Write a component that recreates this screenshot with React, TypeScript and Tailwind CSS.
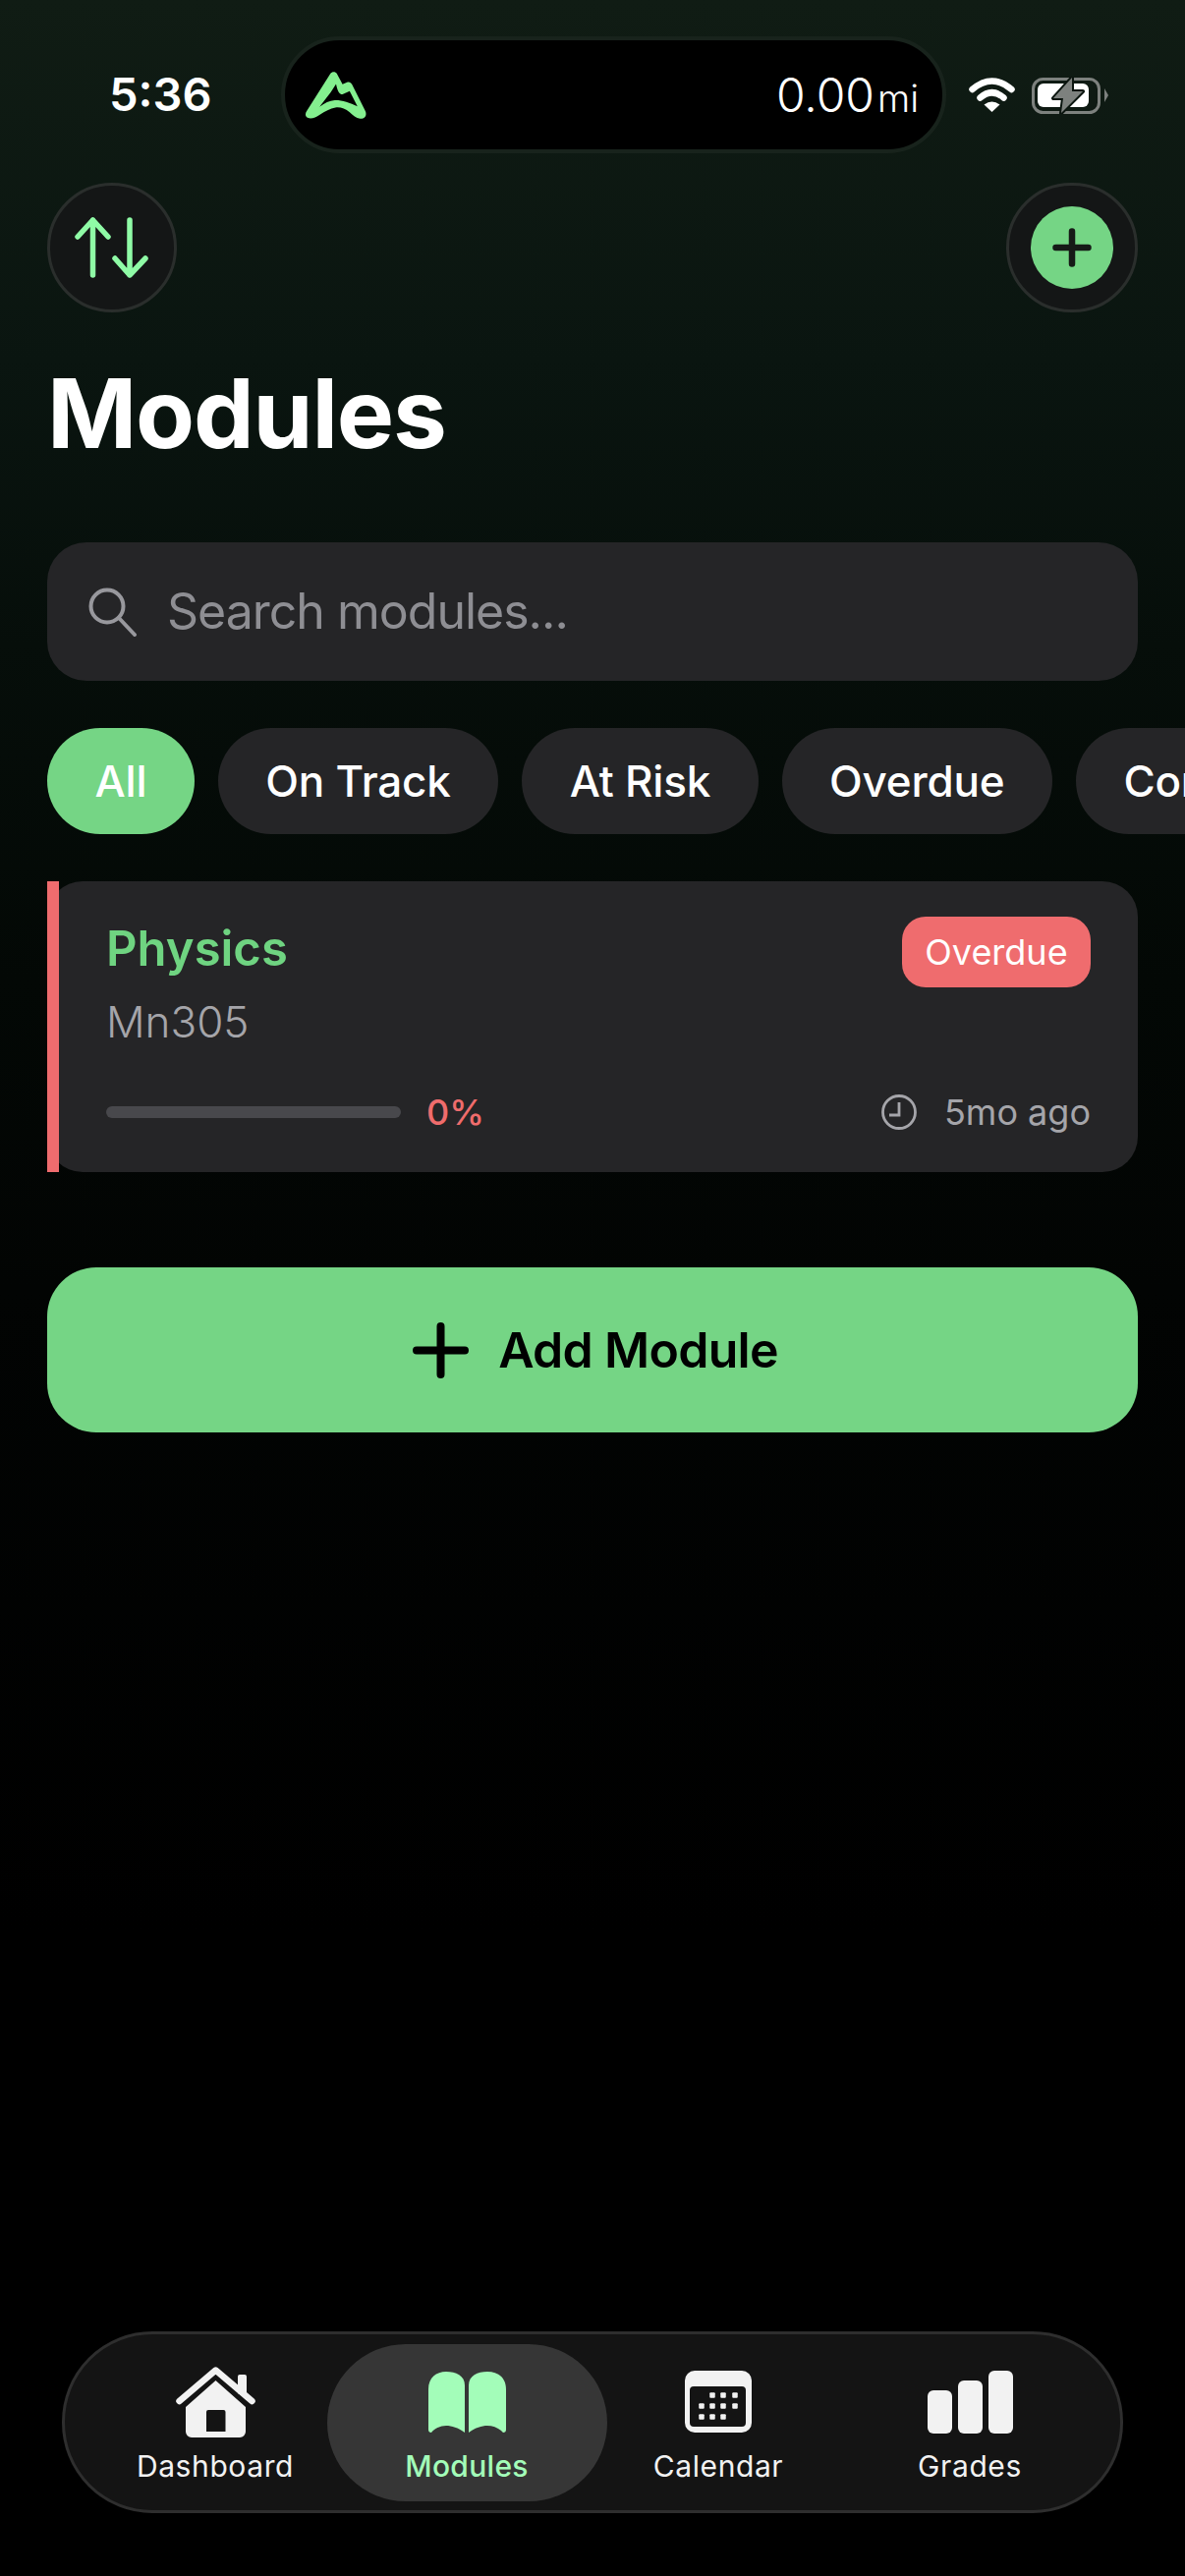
const font = { fontFamily: 'Inter, "Noto Sans", sans-serif' };

function HomeIcon() {
  return (
    <svg width="81" height="72" viewBox="0 0 81 72">
      <rect x="63" y="8" width="9" height="20" rx="2" fill="#f2f2f2" />
      <path d="M3.5 35 L40.5 3.5 L77.5 35" fill="none" stroke="#f2f2f2" strokeWidth="6.5" strokeLinecap="round" strokeLinejoin="round" />
      <path
        fillRule="evenodd"
        fill="#f2f2f2"
        d="M40.5 14 L71 41 V66 a6 6 0 0 1 -6 6 H16 a6 6 0 0 1 -6 -6 V41 Z M33 44 a2 2 0 0 0 -2 2 V66 H50.5 V46 a2 2 0 0 0 -2 -2 Z"
      />
    </svg>
  );
}

function BookIcon() {
  return (
    <svg width="79" height="62" viewBox="0 0 79 62" fill="#a3fdb9">
      <path d="M0 18 C0 6 8 0 18 0 C28 0 37 4 37 14 V62 C30 57 24 55 18 55 C12 55 6 58 3 62 C1 62 0 61 0 59 Z" />
      <path d="M79 18 C79 6 71 0 60 0 C50 0 41 4 41 14 V62 C48 57 54 55 60 55 C66 55 73 58 76 62 C78 62 79 61 79 59 Z" />
    </svg>
  );
}

function CalendarIcon() {
  const dots = [
    [28, 25], [39, 25], [51, 25],
    [17, 36], [28, 36], [39, 36], [51, 36],
    [17, 47], [28, 47], [39, 47],
  ];
  return (
    <svg width="68" height="63" viewBox="0 0 68 63">
      <path
        fillRule="evenodd"
        fill="#f2f2f2"
        d="M10 0 H58 a10 10 0 0 1 10 10 V53 a10 10 0 0 1 -10 10 H10 a10 10 0 0 1 -10 -10 V10 a10 10 0 0 1 10 -10 Z M9 16 a4 4 0 0 0 -4 4 V53 a4 4 0 0 0 4 4 H58 a4 4 0 0 0 4 -4 V20 a4 4 0 0 0 -4 -4 Z"
      />
      {dots.map(([x, y]) => (
        <rect key={`${x}-${y}`} x={x - 2.75} y={y - 2.75} width="5.5" height="5.5" rx="1" fill="#f2f2f2" />
      ))}
    </svg>
  );
}

function GradesIcon() {
  return (
    <svg width="87" height="64" viewBox="0 0 87 64" fill="#f2f2f2">
      <rect x="0" y="20" width="25" height="44" rx="6" />
      <rect x="31" y="10" width="25" height="54" rx="6" />
      <rect x="62" y="0" width="25" height="64" rx="6" />
    </svg>
  );
}

function NavItem({ label, active, icon }: { label: string; active?: boolean; icon: React.ReactNode }) {
  return (
    <div
      className={
        active
          ? 'relative -mx-[14.5px] flex h-[160px] w-[285px] flex-col items-center rounded-[80px] bg-[#363636] pt-[23px]'
          : 'flex h-[160px] w-[256px] flex-col items-center pt-[23px]'
      }
    >
      <div className="flex h-[72px] items-center">{icon}</div>
      <span
        className={`mt-[11px] text-[30px] leading-[36px] ${
          active ? 'font-medium tracking-[0.3px] text-[#a3fdb9]' : 'font-normal tracking-[0.6px] text-[#f2f2f2]'
        }`}
      >
        {label}
      </span>
    </div>
  );
}

function Chip({ label, active }: { label: string; active?: boolean }) {
  return (
    <div
      className={`flex h-[108px] shrink-0 items-center rounded-[54px] px-[48.5px] text-[44px] font-[450] tracking-[-0.2px] text-white ${
        active ? 'bg-[#75d585]' : 'bg-[#252527]'
      }`}
    >
      {label}
    </div>
  );
}

export default function App() {
  return (
    <div
      className="flex h-[2622px] w-[1206px] flex-col overflow-hidden bg-[linear-gradient(180deg,#101c14_0%,#0a1510_14%,#060e0a_25%,#030805_38%,#020403_50%,#000000_75%)] text-white"
      style={font}
    >
      {/* status bar */}
      <div className="mt-[37px] flex h-[119px] items-center pl-[111px]">
        <span className="w-[175px] text-[47px] font-semibold">5:36</span>
        <div className="flex h-[119px] w-[677px] items-center justify-between rounded-full border-[4px] border-[#18231c] bg-black pr-[24px] pl-[21px]">
          <svg width="62" height="48" viewBox="122 128 188 144">
            <path
              fillRule="evenodd"
              fill="#84f08f"
              d="M198 134 C204 126 214 126 219 134 L236 166 L250 160 C256 157 262 160 265 166 L306 248 C313 262 304 274 290 272 C278 270 268 262 258 252 C244 240 228 236 214 238 C198 240 182 250 166 260 C154 268 140 274 130 270 C120 266 120 256 126 248 Z M216 165 L200 190 L165 236 C180 224 196 216 212 215 C232 214 258 222 282 234 L258 187 L236 197 C226 198 220 185 216 165 Z"
            />
          </svg>
          <div className="flex items-baseline text-white">
            <span className="text-[48px] font-[350]">0.00</span>
            <span className="ml-[3px] text-[38px] font-[350]">mi</span>
          </div>
        </div>
        <svg className="ml-[23px]" width="47" height="35" viewBox="0 0 47 35" fill="none">
          <path d="M3.5 12 Q23.5 -5 43.5 12" stroke="#fff" strokeWidth="6.5" strokeLinecap="round" />
          <path d="M11.5 20.5 Q23.5 10 35.5 20.5" stroke="#fff" strokeWidth="6.5" strokeLinecap="round" />
          <path d="M15.5 27.5 Q23.5 21.5 31.5 27.5 L23.5 35 Z" fill="#fff" />
        </svg>
        <svg className="ml-[17px]" width="78" height="38" viewBox="0 0 78 38">
          <rect x="1.5" y="2.5" width="67" height="34" rx="10" fill="none" stroke="#7d817e" strokeWidth="3" />
          <rect x="6" y="7" width="52" height="24" rx="6" fill="#fff" />
          <path d="M74 12 L78 19 L74 26 Z" fill="#7d817e" />
          <path d="M41 1 L22 22 H32 L30 37 L52 15 H41 Z" fill="#7d817e" stroke="#0b150f" strokeWidth="4" strokeLinejoin="round" />
          <path d="M41 1 L22 22 H32 L30 37 L52 15 H41 Z" fill="#7d817e" />
        </svg>
      </div>

      <div className="mt-[30px] flex items-center justify-between pr-[48px] pl-[48px]">
        <div className="flex h-[132px] w-[132px] items-center justify-center rounded-full border-[3px] border-[#2a2e2c] bg-[#141616]">
          <svg width="76" height="62" viewBox="0 0 76 62" fill="none" stroke="#8ffba6" strokeWidth="5.5" strokeLinecap="round" strokeLinejoin="round">
            <path d="M18.5 59 V3 M3 20 L18.5 3 L34 20" />
            <path d="M56 3 V59 M41 42 L56 59 L72 42" />
          </svg>
        </div>
        <div className="flex h-[132px] w-[134px] items-center justify-center rounded-full border-[3px] border-[#2a2e2c] bg-[#141616]">
          <div className="flex h-[84px] w-[84px] items-center justify-center rounded-full bg-[#75d585]">
            <svg width="40" height="40" viewBox="0 0 40 40" stroke="#161a17" strokeWidth="6.5" strokeLinecap="round">
              <path d="M20 3.5 V36.5 M3.5 20 H36.5" />
            </svg>
          </div>
        </div>
      </div>

      <div className="flex flex-col px-[48px]">
        <h1 className="mt-[44px] text-[98px] leading-[118px] font-bold tracking-[-1.2px]">Modules</h1>

        <div className="mt-[72px] flex h-[141px] items-center rounded-[40px] bg-[#252527] pl-[42px]">
          <svg width="50" height="50" viewBox="0 0 50 50" fill="none" stroke="#98989d" strokeWidth="4" strokeLinecap="round">
            <circle cx="19" cy="19" r="16.5" />
            <path d="M31 31 L47 48" />
          </svg>
          <span className="ml-[30px] text-[50px] tracking-[-1px] text-[#8e8e93]">Search modules...</span>
        </div>

        <div className="mt-[48px] flex gap-[24px]">
          <Chip label="All" active />
          <Chip label="On Track" />
          <Chip label="At Risk" />
          <Chip label="Overdue" />
          <Chip label="Completed" />
        </div>

        <div className="relative mt-[48px] h-[296px] rounded-[36px] bg-[#252527] pt-[39px] pr-[48px] pl-[60px]">
          <div className="absolute top-0 bottom-0 left-0 w-[12px] bg-[#ef6c6e]" />
          <div className="absolute top-[36px] right-[48px] flex h-[72px] w-[192px] items-center justify-center rounded-[24px] bg-[#ef6c6e] text-[36px] text-white">
            Overdue
          </div>
          <div className="text-[49px] leading-[60px] font-semibold text-[#6fd481]">Physics</div>
          <div className="mt-[18px] text-[44px] leading-[52px] font-[350] text-[#a5a5aa]">Mn305</div>
          <div className="mt-[39px] flex items-center">
            <div className="h-[12px] w-[300px] rounded-full bg-[#48484c]" />
            <span className="ml-[26px] text-[36px] font-medium text-[#ef6c6c]">0%</span>
            <svg className="mr-[28px] ml-auto" width="36" height="36" viewBox="0 0 36 36" fill="none" stroke="#a5a5aa" strokeWidth="2.8">
              <circle cx="18" cy="18" r="16.5" />
              <path d="M18 8 V21 H8" />
            </svg>
            <span className="text-[36px] text-[#a5a5aa]">5mo ago</span>
          </div>
        </div>

        <div className="mt-[97px] flex h-[168px] items-center justify-center gap-[30px] rounded-[50px] bg-[#75d585] pl-[6px] text-black">
          <svg width="57" height="57" viewBox="0 0 57 57" stroke="#000" strokeWidth="8" strokeLinecap="round">
            <path d="M28.5 4 V53 M4 28.5 H53" />
          </svg>
          <span className="text-[50px] font-semibold tracking-[-0.7px]">Add Module</span>
        </div>
      </div>

      <nav className="mt-auto mb-[64px] ml-[63px] flex h-[185px] w-[1080px] items-center justify-center rounded-[92px] border-[3px] border-[#2e2e2e] bg-[#141414]">
        <NavItem label="Dashboard" icon={<HomeIcon />} />
        <NavItem label="Modules" active icon={<BookIcon />} />
        <NavItem label="Calendar" icon={<CalendarIcon />} />
        <NavItem label="Grades" icon={<GradesIcon />} />
      </nav>
    </div>
  );
}
